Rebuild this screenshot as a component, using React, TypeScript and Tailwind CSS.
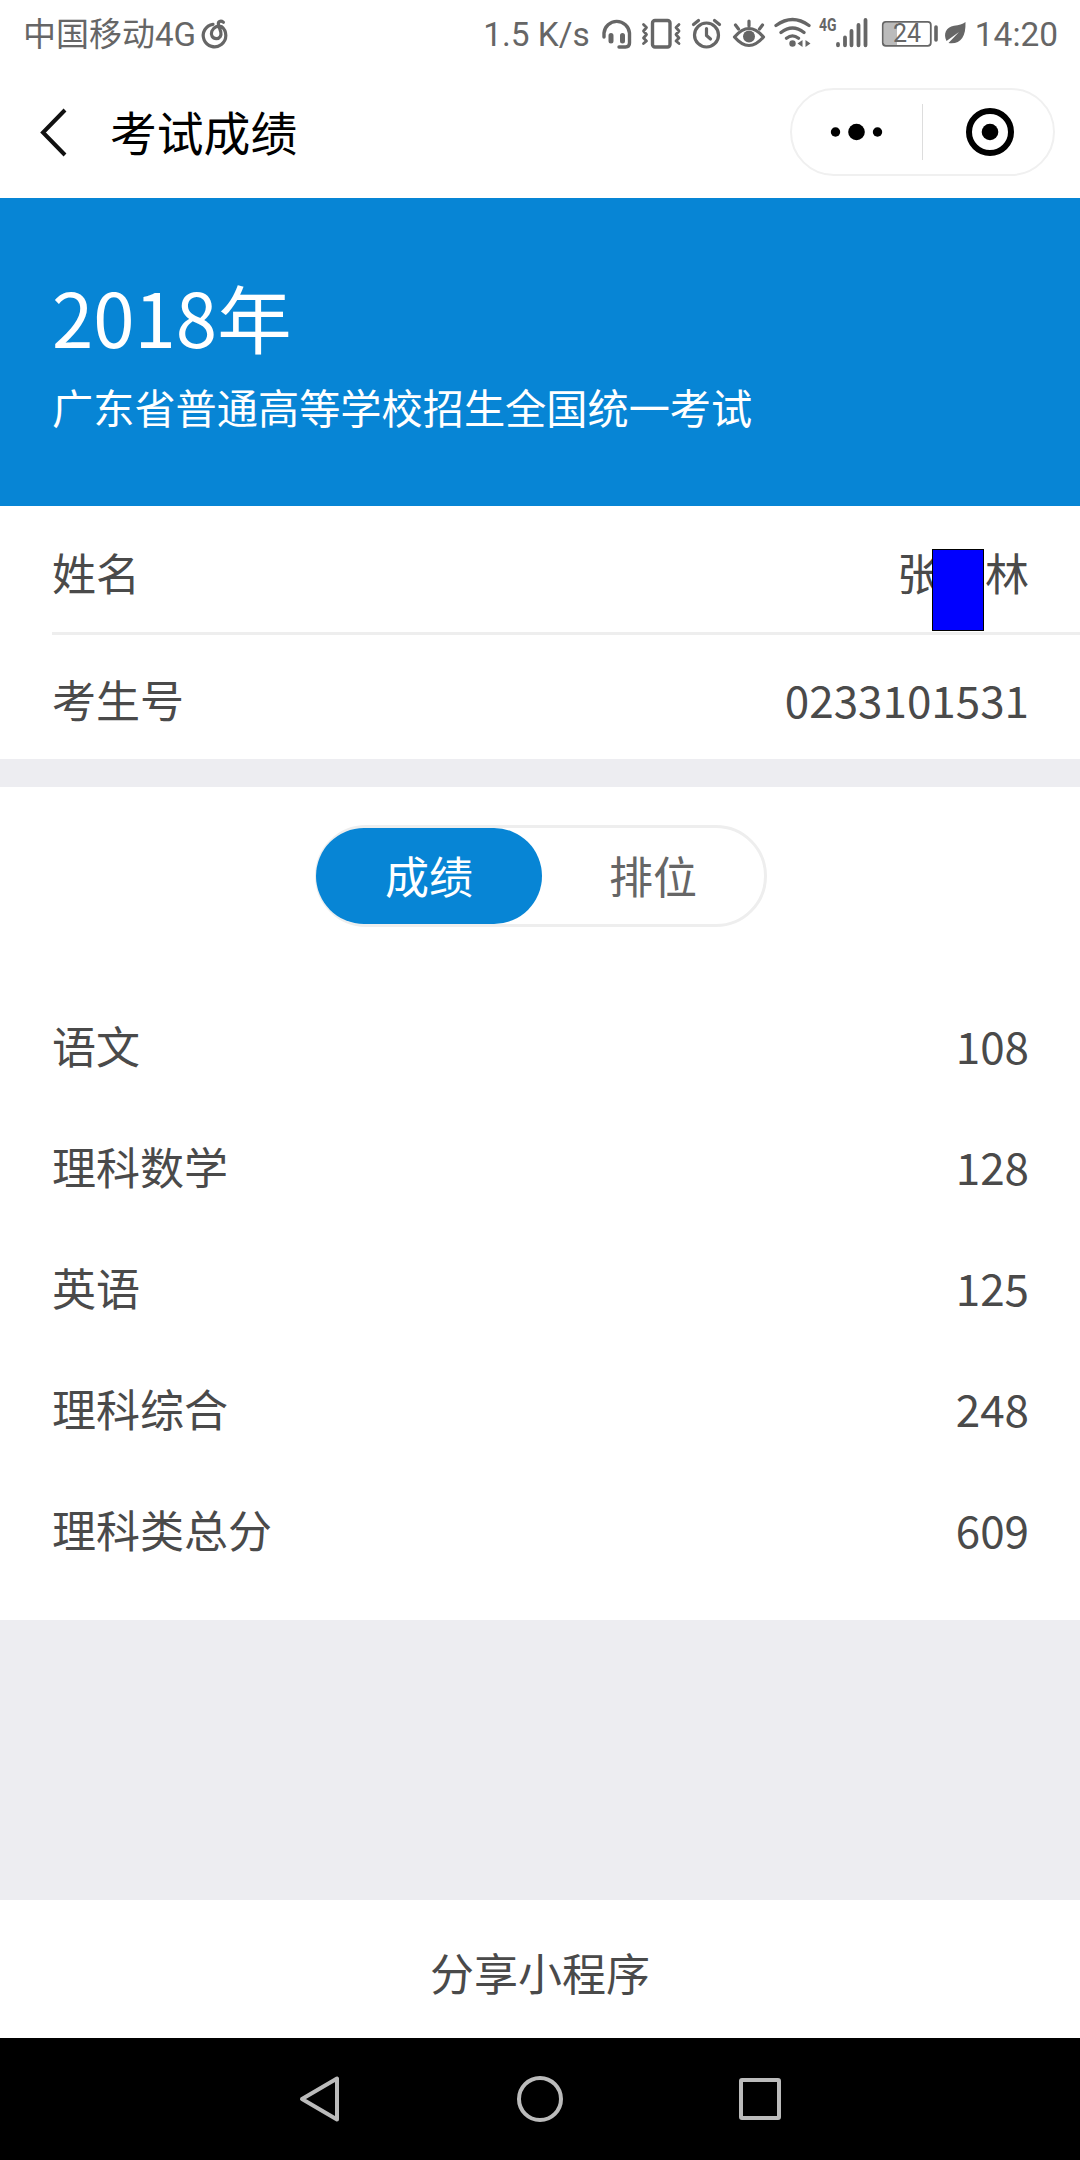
import type { ReactNode } from "react";

const subjects = [
  { name: "语文", score: 108 },
  { name: "理科数学", score: 128 },
  { name: "英语", score: 125 },
  { name: "理科综合", score: 248 },
  { name: "理科类总分", score: 609 },
];

function StatusIcon({ box, className, children }: { box: string; className: string; children: ReactNode }) {
  return (
    <svg viewBox={box} className={`h-10 shrink-0 ${className}`} fill="none" stroke="#666" strokeLinecap="round" strokeLinejoin="round">
      {children}
    </svg>
  );
}

function StatusBar() {
  return (
    <div className="flex h-[68px] items-center justify-between pl-[23px] pr-[22px] text-[33.400px] leading-10 text-[#666] font-[Roboto,'Noto_Sans_CJK_SC',sans-serif]">
      <div className="flex items-center">
        <span className="whitespace-nowrap pt-0.5 text-[33px]">中国移动4G</span>
        <StatusIcon box="198 14 34 40" className="ml-[3px] w-[34px]">
          <path d="M212 24.3A11.3 11.3 0 1 0 220.5 26.6C217.5 25.2 212.3 27 210.8 31.2C209.5 35 211.5 38.6 215.3 38.6C219 38.6 220.6 35.5 219.8 32L217.4 24.5C216.9 21.6 219.6 20.2 222.4 22.2" strokeWidth="3.200" />
        </StatusIcon>
      </div>
      <div className="flex items-center">
        <span className="mr-[9px] whitespace-nowrap pt-0.5">1.5 K/s</span>
        {/* headset */}
        <StatusIcon box="600 14 38 40" className="w-[38px]">
          <path d="M605 37V33A12.8 12.8 0 0 1 630.5 33V43Q630.500 47 626.500 47H620" strokeWidth="3.400" />
          <path d="M612 35.500V41M623.500 35.500V41" strokeWidth="5" />
        </StatusIcon>
        {/* vibrate */}
        <StatusIcon box="638 14 48 40" className="w-12">
          <rect x="653.500" y="20.500" width="17.500" height="26.500" rx="2.500" strokeWidth="3.400" />
          <path d="M644.500 24.500L647.500 27.500L644.500 31L647.500 34.500L644.500 38L647.500 41L644.500 43.500M680 24.500L677 27.500L680 31L677 34.500L680 38L677 41L680 43.500" strokeWidth="2.800" />
        </StatusIcon>
        {/* alarm */}
        <StatusIcon box="686 14 42 40" className="w-[42px]">
          <circle cx="707.500" cy="35" r="12" strokeWidth="3.200" />
          <path d="M707.500 28.500V35.500L711.500 39" strokeWidth="3.200" />
          <path d="M694.500 24.500L699.500 20.500M720.500 24.500L715.500 20.500" strokeWidth="3.200" />
        </StatusIcon>
        {/* eye */}
        <StatusIcon box="728 14 42 40" className="w-[42px]">
          <path d="M735.500 37Q750 20 764.500 37Q750 54 735.500 37Z" strokeWidth="3.200" />
          <circle cx="750" cy="36.500" r="6" fill="#666" stroke="none" />
          <path d="M750 26V21M739.500 29L736.500 25M760.500 29L763.500 25" strokeWidth="3.200" />
        </StatusIcon>
        {/* wifi */}
        <StatusIcon box="770 14 46 40" className="w-[46px]">
          <path d="M777 25.500Q793.500 13.500 810 25.500M782 32.500Q793.500 23.500 805 32.500M787.500 38.300Q793.500 33.500 799.500 38.300" strokeWidth="3.300" />
          <circle cx="793.500" cy="43.500" r="3.200" fill="#666" stroke="none" />
          <path d="M803.500 40V47L798.500 43.500ZM806.500 40V47L811.500 43.500Z" fill="#666" stroke="none" />
        </StatusIcon>
        {/* signal */}
        <StatusIcon box="816 14 60 40" className="w-[60px]">
          <text x="820" y="31" fontSize="19" fontWeight="700" textLength="17.500" lengthAdjust="spacingAndGlyphs" fill="#666" stroke="none">4G</text>
          <path d="M839 44V45.300M846 37.500V45.300M852.500 31V45.300M859.500 25V45.300M866.500 20V45.300" strokeWidth="3.800" />
        </StatusIcon>
        {/* battery */}
        <StatusIcon box="876 14 66 40" className="w-[66px]">
          <rect x="885" y="23" width="13" height="22" fill="#bbb" stroke="none" />
          <rect x="883.800" y="21.800" width="48" height="24" rx="3" strokeWidth="1.800" />
          <path d="M937 27V40" strokeWidth="3.600" />
          <text x="908" y="42" fontSize="25" textAnchor="middle" fill="#666" stroke="none">24</text>
        </StatusIcon>
        {/* power saving leaf */}
        <StatusIcon box="942 14 30 40" className="w-[30px]">
          <path d="M966.500 22C967 38 961 44.500 949.500 43L960 32L947.500 41C944 34 947 27 955 25.800C960 25.200 963.500 24.500 966.500 22Z" fill="#666" stroke="none" />
        </StatusIcon>
        <span className="ml-[4px] pt-0.5">14:20</span>
      </div>
    </div>
  );
}

function TitleBar() {
  return (
    <div className="flex h-[130px] items-center pb-0.5 pl-10 pr-[25px]">
      <svg viewBox="0 0 28 50" className="h-[50px] w-7" fill="none" stroke="#111" strokeWidth="4">
        <path d="M25 3L3 25.500L25 48" />
      </svg>
      <h1 className="ml-[42px] pb-0.5 text-[46.800px] leading-[60px] text-black">考试成绩</h1>
      <div className="ml-auto flex h-[88px] w-[265px] items-center rounded-full border-2 border-[#f0f0f0]">
        <svg viewBox="0 0 130 84" className="h-[84px] w-[130px]">
          <circle cx="43.500" cy="42" r="4.700" />
          <circle cx="64.500" cy="42" r="8.300" />
          <circle cx="85.500" cy="42" r="4.700" />
        </svg>
        <div className="h-14 w-px bg-[#ddd]" />
        <svg viewBox="0 0 130 84" className="h-[84px] w-[130px]">
          <circle cx="67" cy="42" r="21" fill="none" stroke="#000" strokeWidth="6" />
          <circle cx="67" cy="42" r="8.300" />
        </svg>
      </div>
    </div>
  );
}

export default function App() {
  return (
    <div className="flex h-[2160px] w-[1080px] flex-col bg-white text-[44px] text-[#4a4a4a] font-['Noto_Sans_CJK_SC',sans-serif]">
      <StatusBar />
      <TitleBar />

      <div className="flex h-[308px] flex-col bg-[#0785d5] pl-[52px] pt-[68px] text-white">
        <div className="text-[74.400px] leading-[100px]">2018年</div>
        <div className="mt-[10px] text-[41.200px] leading-[60px]">广东省普通高等学校招生全国统一考试</div>
      </div>

      <div className="pl-[52px]">
        <div className="flex h-[129px] items-center justify-between border-b-[3px] border-[#eee] pr-[51px] pt-1.5">
          <span>姓名</span>
          <span className="relative w-[132px]">
            <span className="flex justify-between">
              <span>张</span>
              <span>林</span>
            </span>
            <span className="absolute left-[35px] top-[10px] h-[82px] w-[52px] border border-black bg-[#0000ff]" />
          </span>
        </div>
        <div className="flex h-[124px] items-center justify-between pr-[51px] pt-1">
          <span>考生号</span>
          <span>0233101531</span>
        </div>
      </div>

      <div className="h-7 bg-[#ededf1]" />

      <div className="flex h-[833px] flex-col pt-[38px]">
        <div className="ml-[315px] flex h-[102px] w-[452px] rounded-full border-[3px] border-[#eee]">
          <div className="-ml-[2px] flex h-24 w-[226px] items-center justify-center rounded-full bg-[#0785d5] pb-0.5 text-white">成绩</div>
          <div className="flex h-24 flex-1 items-center justify-center pb-0.5 text-[#666]">排位</div>
        </div>
        <div className="mt-[57px] pl-[52px] pr-[51px]">
          {subjects.map((s) => (
            <div key={s.name} className="flex h-[121px] items-center justify-between">
              <span>{s.name}</span>
              <span>{s.score}</span>
            </div>
          ))}
        </div>
      </div>

      <div className="h-[280px] bg-[#ededf1]" />

      <div className="flex h-[138px] items-center justify-center pt-1.5">分享小程序</div>

      <div className="flex h-[122px] items-center justify-center gap-[170px] bg-black">
        <svg viewBox="0 0 50 50" className="size-[50px]" fill="none" stroke="#bbb" strokeWidth="4" strokeLinejoin="round">
          <path d="M42 4.500V45.500L7 25Z" />
        </svg>
        <svg viewBox="0 0 50 50" className="size-[50px]" fill="none" stroke="#bbb" strokeWidth="4">
          <circle cx="25" cy="25" r="21" />
        </svg>
        <svg viewBox="0 0 50 50" className="size-[50px]" fill="none" stroke="#bbb" strokeWidth="4" strokeLinejoin="round">
          <rect x="6" y="6" width="38" height="38" rx="1" />
        </svg>
      </div>
    </div>
  );
}
